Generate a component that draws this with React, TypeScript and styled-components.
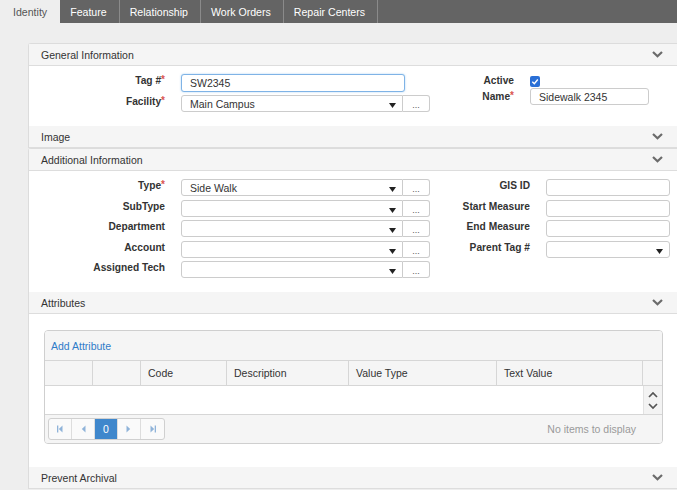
import { Fragment } from "react";
import styled, { createGlobalStyle } from "styled-components";

const GlobalStyle = createGlobalStyle`
  html, body {
    margin: 0;
    padding: 0;
    overflow: hidden;
    background: #eeeeee;
  }
  body {
    font-family: "Liberation Sans", Arial, sans-serif;
    font-size: 10.5px;
    color: #333;
  }
  * {
    box-sizing: border-box;
  }
`;

const TabBar = styled.div`
  display: flex;
  height: 23px;
  background: #646464;
`;

const Tab = styled.div<{ $active?: boolean }>`
  display: flex;
  align-items: center;
  padding: ${({ $active }) => ($active ? "0 13px" : "0 12px 0 10px")};
  font-size: 10.6px;
  color: ${({ $active }) => ($active ? "#555" : "#fff")};
  background: ${({ $active }) => ($active ? "#eeeeee" : "transparent")};
  border-right: ${({ $active }) => ($active ? "none" : "1px solid #8a8a8a")};
  white-space: nowrap;
`;

const Content = styled.div`
  padding: 20px 0 0 28px;
`;

const Panel = styled.div`
  background: #fff;
  border: 1px solid #dcdcdc;
  border-bottom: none;
  border-right: none;
  border-radius: 3px 0 0 0;
`;

const SectionHeader = styled.div`
  display: flex;
  align-items: center;
  justify-content: space-between;
  height: 22px;
  padding: 0 14px 0 12px;
  background: #f5f5f5;
  border-bottom: 1px solid #dddddd;
  color: #333;
`;

const FormBody = styled.div`
  display: flex;
  align-items: flex-start;
  padding: 8px 0 14px 0;
`;

const FieldGrid = styled.div<{ $label: number; $field: number; $gap: number; $left?: number }>`
  display: grid;
  grid-template-columns: ${({ $label, $field }) => `${$label}px ${$field}px`};
  column-gap: 16px;
  row-gap: ${({ $gap }) => $gap}px;
  margin-left: ${({ $left }) => $left ?? 0}px;
`;

const Label = styled.div<{ $center?: boolean }>`
  text-align: right;
  font-weight: bold;
  font-size: 10.2px;
  line-height: 14px;
  white-space: nowrap;
  color: #333;
  align-self: ${({ $center }) => ($center ? "center" : "start")};
`;

const Req = styled.span`
  color: #d9534f;
  font-size: 10px;
  font-weight: bold;
  vertical-align: top;
  line-height: 11px;
`;

const TextInput = styled.input<{ $width: number; $focused?: boolean }>`
  width: ${({ $width }) => $width}px;
  height: ${({ $focused }) => ($focused ? 18 : 17)}px;
  padding: 0 8px;
  font: inherit;
  color: #333;
  border: 1px solid ${({ $focused }) => ($focused ? "#7fb3e6" : "#cccccc")};
  border-radius: 3px;
  box-shadow: ${({ $focused }) =>
    $focused ? "0 0 2px rgba(102, 175, 233, 0.6)" : "none"};
  outline: none;
  background: #fff;
`;

const Combo = styled.div`
  display: flex;
  height: 17px;
`;

const Select = styled.div<{ $width: number; $alone?: boolean }>`
  position: relative;
  width: ${({ $width }) => $width}px;
  height: 17px;
  padding: 0 8px;
  display: flex;
  align-items: center;
  border: 1px solid #cccccc;
  border-radius: ${({ $alone }) => ($alone ? "3px" : "3px 0 0 3px")};
  background: #fff;
  color: #333;

  svg {
    position: absolute;
    right: 6px;
    bottom: 3px;
  }
`;

const MoreButton = styled.div`
  width: 27px;
  height: 17px;
  display: flex;
  align-items: flex-end;
  justify-content: center;
  padding-bottom: 1px;
  border: 1px solid #cccccc;
  border-left: none;
  border-radius: 0 3px 3px 0;
  background: #fff;
  color: #555;
  font-size: 9px;
  line-height: 9px;
`;

const CheckRow = styled.div`
  height: 14px;
  padding-top: 2px;
`;

const AttributesBody = styled.div`
  padding: 16px 14px 23px 15px;
`;

const GridBox = styled.div`
  border: 1px solid #cfcfcf;
  border-radius: 4px;
  overflow: hidden;
  background: #fff;
`;

const GridToolbar = styled.div`
  display: flex;
  align-items: center;
  height: 30px;
  padding-left: 6px;
  background: #f5f5f5;
  border-bottom: 1px solid #d6d6d6;
`;

const AddLink = styled.span`
  color: #2f7bc8;
`;

const GridRow = styled.div<{ $height: number; $header?: boolean }>`
  display: grid;
  grid-template-columns: 48px 48px 86px 122px 148px 146px 1fr;
  height: ${({ $height }) => $height}px;
  background: ${({ $header }) => ($header ? "#f5f5f5" : "#fff")};
  border-bottom: 1px solid #d6d6d6;
`;

const HeaderCell = styled.div<{ $last?: boolean }>`
  display: flex;
  align-items: center;
  padding-left: 7px;
  border-right: ${({ $last }) => ($last ? "none" : "1px solid #d6d6d6")};
  color: #333;
`;

const ScrollCell = styled.div`
  grid-column: 7;
  display: flex;
  flex-direction: column;
  align-items: center;
  justify-content: center;
  gap: 5px;
  background: #f3f3f3;
  border-left: 1px solid #e2e2e2;
`;

const EmptyCell = styled.div`
  grid-column: 1 / 7;
`;

const PagerRow = styled.div`
  display: flex;
  align-items: center;
  justify-content: space-between;
  height: 28px;
  padding: 0 26px 0 3px;
  background: #f5f5f5;
`;

const Pager = styled.div`
  display: flex;
  height: 22px;
  border: 1px solid #d0d0d0;
  border-radius: 3px;
  overflow: hidden;
  background: #fafafa;
`;

const PageButton = styled.div<{ $active?: boolean }>`
  width: 23px;
  display: flex;
  align-items: center;
  justify-content: center;
  border-right: 1px solid #dddddd;
  background: ${({ $active }) => ($active ? "#3f87cc" : "transparent")};
  color: ${({ $active }) => ($active ? "#fff" : "#333")};

  &:last-child {
    border-right: none;
  }
`;

const Muted = styled.span`
  color: #9a9a9a;
`;

const Chevron = () => (
  <svg width="11" height="7" viewBox="0 0 11 7">
    <path d="M1 1l4.5 4.3L10 1" stroke="#6b6b6b" strokeWidth="2.2" fill="none" />
  </svg>
);

const Arrow = () => (
  <svg width="7" height="5" viewBox="0 0 7 5">
    <path d="M0 0h7L3.5 5z" fill="#222" />
  </svg>
);

const Check = () => (
  <svg width="10" height="11" viewBox="0 0 10 11">
    <rect x="0" y="0" width="10" height="11" rx="2" fill="#2a6fd6" />
    <path d="M2.3 5.8l2 2 3.5-4.3" stroke="#fff" strokeWidth="1.4" fill="none" />
  </svg>
);

const PagerIcon = ({ dir, bar }: { dir: "left" | "right"; bar?: boolean }) => (
  <svg width="8" height="8" viewBox="0 0 8 8">
    {dir === "left" ? (
      <>
        {bar && <rect x="1" y="0.5" width="1.3" height="7" fill="#8fb3d9" />}
        <path d="M6.5 0.5v7L2.8 4z" fill="#8fb3d9" />
      </>
    ) : (
      <>
        <path d="M1.5 0.5v7L5.2 4z" fill="#8fb3d9" />
        {bar && <rect x="5.7" y="0.5" width="1.3" height="7" fill="#8fb3d9" />}
      </>
    )}
  </svg>
);

const ScrollArrow = ({ up }: { up?: boolean }) => (
  <svg width="10" height="7" viewBox="0 0 10 7">
    <path
      d={up ? "M1 6l4-4 4 4" : "M1 1l4 4 4-4"}
      stroke="#555"
      strokeWidth="1.7"
      fill="none"
    />
  </svg>
);

const Header = ({ title }: { title: string }) => (
  <SectionHeader>
    <span>{title}</span>
    <Chevron />
  </SectionHeader>
);

const SelectWithMore = ({ value }: { value?: string }) => (
  <Combo>
    <Select $width={222}>
      {value}
      <Arrow />
    </Select>
    <MoreButton>...</MoreButton>
  </Combo>
);

const App = () => {
  const tabs = ["Identity", "Feature", "Relationship", "Work Orders", "Repair Centers"];
  const leftFields = ["SubType", "Department", "Account", "Assigned Tech"];

  return (
    <>
      <GlobalStyle />
      <TabBar>
        {tabs.map((t, i) => (
          <Tab key={t} $active={i === 0}>
            {t}
          </Tab>
        ))}
      </TabBar>
      <Content>
        <Panel>
          <Header title="General Information" />
          <FormBody>
            <FieldGrid $label={136} $field={249} $gap={3}>
              <Label>
                Tag #<Req>*</Req>
              </Label>
              <TextInput $width={224} $focused readOnly value="SW2345" />
              <Label>
                Facility<Req>*</Req>
              </Label>
              <SelectWithMore value="Main Campus" />
            </FieldGrid>
            <FieldGrid $label={74} $field={119} $gap={0} $left={10}>
              <Label>Active</Label>
              <CheckRow>
                <Check />
              </CheckRow>
              <Label $center>
                Name<Req>*</Req>
              </Label>
              <TextInput $width={119} readOnly value="Sidewalk 2345" />
            </FieldGrid>
          </FormBody>
          <Header title="Image" />
        </Panel>
        <Panel>
          <Header title="Additional Information" />
          <FormBody>
            <FieldGrid $label={136} $field={249} $gap={3.5}>
              <Label>
                Type<Req>*</Req>
              </Label>
              <SelectWithMore value="Side Walk" />
              {leftFields.map((f) => (
                <Fragment key={f}>
                  <Label>{f}</Label>
                  <SelectWithMore />
                </Fragment>
              ))}
            </FieldGrid>
            <FieldGrid $label={90} $field={124} $gap={3.5} $left={10}>
              <Label>GIS ID</Label>
              <TextInput $width={124} readOnly value="" />
              <Label>Start Measure</Label>
              <TextInput $width={124} readOnly value="" />
              <Label>End Measure</Label>
              <TextInput $width={124} readOnly value="" />
              <Label>Parent Tag #</Label>
              <Select $width={124} $alone>
                <Arrow />
              </Select>
            </FieldGrid>
          </FormBody>
          <Header title="Attributes" />
          <AttributesBody>
            <GridBox>
              <GridToolbar>
                <AddLink>Add Attribute</AddLink>
              </GridToolbar>
              <GridRow $height={25} $header>
                <HeaderCell />
                <HeaderCell />
                <HeaderCell>Code</HeaderCell>
                <HeaderCell>Description</HeaderCell>
                <HeaderCell>Value Type</HeaderCell>
                <HeaderCell>Text Value</HeaderCell>
                <HeaderCell $last />
              </GridRow>
              <GridRow $height={29}>
                <EmptyCell />
                <ScrollCell>
                  <ScrollArrow up />
                  <ScrollArrow />
                </ScrollCell>
              </GridRow>
              <PagerRow>
                <Pager>
                  <PageButton>
                    <PagerIcon dir="left" bar />
                  </PageButton>
                  <PageButton>
                    <PagerIcon dir="left" />
                  </PageButton>
                  <PageButton $active>0</PageButton>
                  <PageButton>
                    <PagerIcon dir="right" />
                  </PageButton>
                  <PageButton>
                    <PagerIcon dir="right" bar />
                  </PageButton>
                </Pager>
                <Muted>No items to display</Muted>
              </PagerRow>
            </GridBox>
          </AttributesBody>
          <Header title="Prevent Archival" />
        </Panel>
      </Content>
    </>
  );
};

export default App;
